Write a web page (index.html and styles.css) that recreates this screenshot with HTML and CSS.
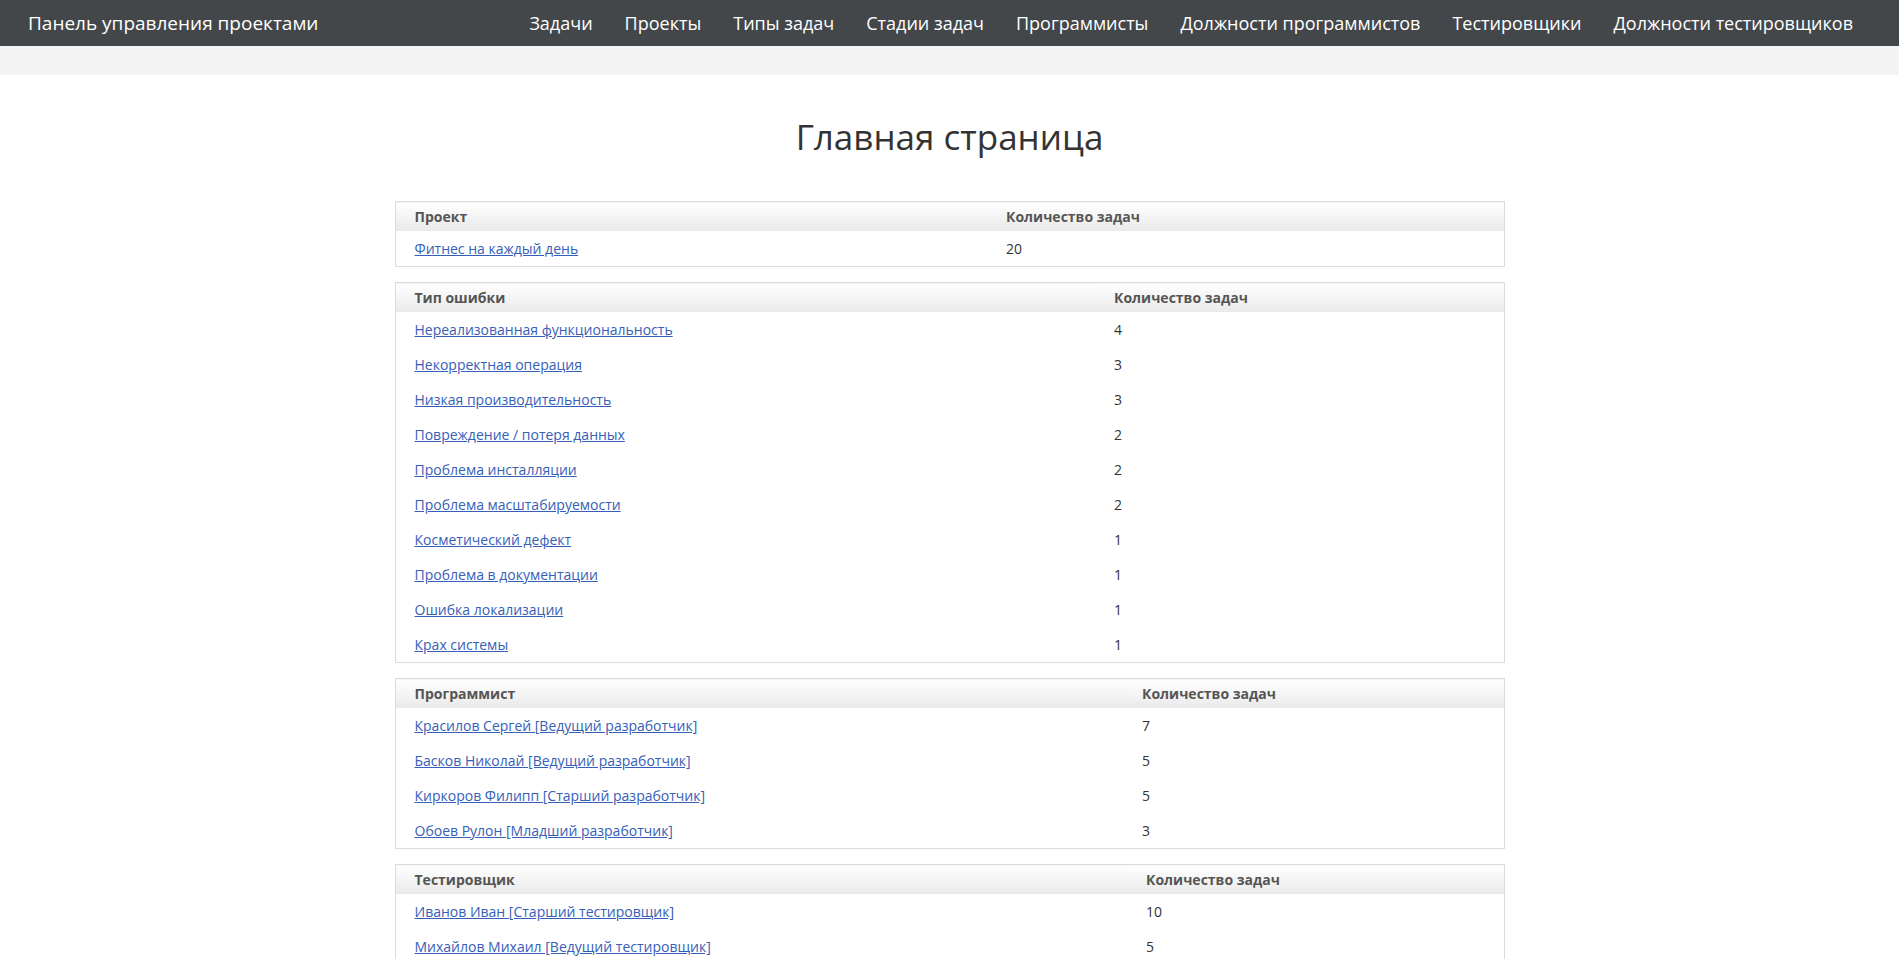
FILE: index.html
```html
<!DOCTYPE html>
<html lang="ru">
<head>
<meta charset="utf-8">
<title>Панель управления проектами</title>
<link rel="stylesheet" href="styles.css">
</head>
<body>
<nav class="navbar">
  <a class="brand" href="#">Панель управления проектами</a>
  <ul class="nav">
    <li><a href="#">Задачи</a></li>
    <li><a href="#">Проекты</a></li>
    <li><a href="#">Типы задач</a></li>
    <li><a href="#">Стадии задач</a></li>
    <li><a href="#">Программисты</a></li>
    <li><a href="#">Должности программистов</a></li>
    <li><a href="#">Тестировщики</a></li>
    <li><a href="#">Должности тестировщиков</a></li>
  </ul>
</nav>
<div class="band"></div>
<main class="container">
  <h1 class="title">Главная страница</h1>

  <table class="stats">
    <thead><tr><th class="c1 w-project">Проект</th><th>Количество задач</th></tr></thead>
    <tbody>
      <tr><td><a href="#">Фитнес на каждый день</a></td><td>20</td></tr>
    </tbody>
  </table>

  <table class="stats">
    <thead><tr><th class="c1 w-type">Тип ошибки</th><th>Количество задач</th></tr></thead>
    <tbody>
      <tr><td><a href="#">Нереализованная функциональность</a></td><td>4</td></tr>
      <tr><td><a href="#">Некорректная операция</a></td><td>3</td></tr>
      <tr><td><a href="#">Низкая производительность</a></td><td>3</td></tr>
      <tr><td><a href="#">Повреждение / потеря данных</a></td><td>2</td></tr>
      <tr><td><a href="#">Проблема инсталляции</a></td><td>2</td></tr>
      <tr><td><a href="#">Проблема масштабируемости</a></td><td>2</td></tr>
      <tr><td><a href="#">Косметический дефект</a></td><td>1</td></tr>
      <tr><td><a href="#">Проблема в документации</a></td><td>1</td></tr>
      <tr><td><a href="#">Ошибка локализации</a></td><td>1</td></tr>
      <tr><td><a href="#">Крах системы</a></td><td>1</td></tr>
    </tbody>
  </table>

  <table class="stats">
    <thead><tr><th class="c1 w-dev">Программист</th><th>Количество задач</th></tr></thead>
    <tbody>
      <tr><td><a href="#">Красилов Сергей [Ведущий разработчик]</a></td><td>7</td></tr>
      <tr><td><a href="#">Басков Николай [Ведущий разработчик]</a></td><td>5</td></tr>
      <tr><td><a href="#">Киркоров Филипп [Старший разработчик]</a></td><td>5</td></tr>
      <tr><td><a href="#">Обоев Рулон [Младший разработчик]</a></td><td>3</td></tr>
    </tbody>
  </table>

  <table class="stats">
    <thead><tr><th class="c1 w-test">Тестировщик</th><th>Количество задач</th></tr></thead>
    <tbody>
      <tr><td><a href="#">Иванов Иван [Старший тестировщик]</a></td><td>10</td></tr>
      <tr><td><a href="#">Михайлов Михаил [Ведущий тестировщик]</a></td><td>5</td></tr>
      <tr><td><a href="#">Петров Пётр [Младший тестировщик]</a></td><td>5</td></tr>
    </tbody>
  </table>
</main>
</body>
</html>
```

FILE: styles.css
```css
* { box-sizing: border-box; }

html, body {
  margin: 0;
  padding: 0;
  background: #fff;
  font-family: "Open Sans", "Noto Sans", "Liberation Sans", sans-serif;
  color: #333;
}

.navbar {
  height: 46px;
  background: #43474a;
  display: flex;
  align-items: center;
  justify-content: space-between;
  padding: 0 30px 0 28px;
}

.brand {
  color: #fff;
  text-decoration: none;
  font-size: 19px;
}

.nav {
  list-style: none;
  margin: 0;
  padding: 0;
  display: flex;
}

.nav a {
  display: block;
  color: #fff;
  text-decoration: none;
  font-size: 18px;
  padding: 0 16px;
}

.band {
  height: 29px;
  background: #f4f4f4;
}

.container {
  width: 1140px;
  margin: 0 auto;
  padding: 0 15px;
}

.title {
  margin: 41px 0 43px;
  text-align: center;
  font-size: 35px;
  font-weight: 400;
  line-height: 1.2;
  color: #333;
}

.stats {
  width: 100%;
  border-collapse: collapse;
  border: 1px solid #dcdcdc;
  margin-bottom: 15px;
  font-size: 14px;
  table-layout: fixed;
}

.stats th {
  text-align: left;
  font-size: 14px;
  font-weight: 700;
  color: #555;
  line-height: 20px;
  padding: 5px 19px 4px;
  background: linear-gradient(to bottom, #ffffff 0%, #e9e9e9 100%);
}

.stats td {
  line-height: 21px;
  padding: 7px 19px;
  color: #333;
}

.stats a {
  color: #3660b8;
  text-decoration: underline;
}

.w-project { width: 592px; }
.w-type { width: 700px; }
.w-dev { width: 728px; }
.w-test { width: 732px; }
```
